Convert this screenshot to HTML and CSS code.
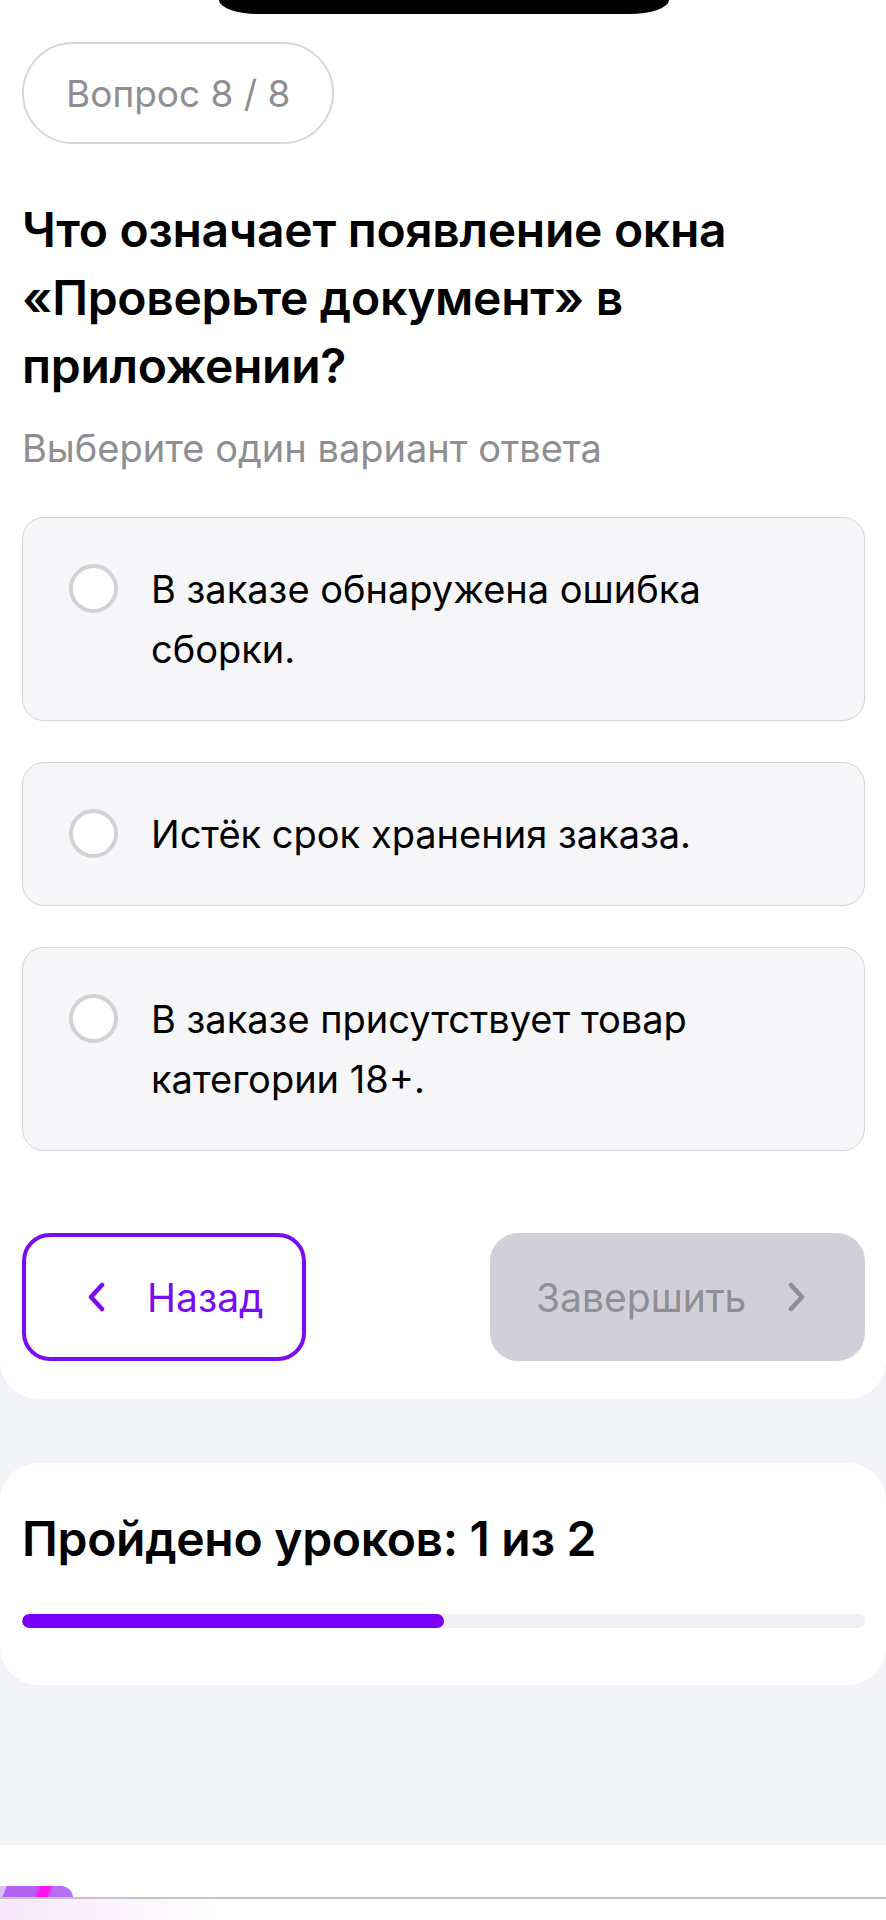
FILE: index.html
```html
<!DOCTYPE html>
<html lang="ru">
<head>
    <meta charset="UTF-8">
    <meta name="viewport" content="width=device-width, initial-scale=1.0">
    <title>Вопрос 8 / 8</title>
    <link rel="stylesheet" href="styles.css">
</head>
<body>
    <div class="page">
        <section class="quiz">
            <div class="notch"></div>
            <div class="counter">Вопрос 8 / 8</div>

            <h1 class="question">Что означает появление окна «Проверьте документ» в приложении?</h1>
            <p class="hint">Выберите один вариант ответа</p>

            <ul class="answers">
                <li class="answer">
                    <span class="radio"></span>
                    <span class="answer-text">В заказе обнаружена ошибка сборки.</span>
                </li>
                <li class="answer">
                    <span class="radio"></span>
                    <span class="answer-text">Истёк срок хранения заказа.</span>
                </li>
                <li class="answer">
                    <span class="radio"></span>
                    <span class="answer-text">В заказе присутствует товар категории 18+.</span>
                </li>
            </ul>

            <div class="nav">
                <button class="btn btn-back">
                    <svg class="chevron" width="18" height="30" viewBox="0 0 18 30"><path d="M15 3 L4 15 L15 27" /></svg>
                    Назад
                </button>
                <button class="btn btn-finish" disabled>
                    Завершить
                    <svg class="chevron" width="18" height="30" viewBox="0 0 18 30"><path d="M3 3 L14 15 L3 27" /></svg>
                </button>
            </div>
        </section>

        <section class="lessons">
            <h2>Пройдено уроков: 1 из 2</h2>
            <div class="bar"><div class="bar-fill" style="width: 50%"></div></div>
        </section>

        <div class="filler"></div>

        <div class="tabbar">
            <div class="tab-icon"></div>
        </div>
    </div>
</body>
</html>
```

FILE: styles.css
```css
* {
    box-sizing: border-box;
}

body {
    margin: 0;
    height: 100vh;
    background: #f2f3f6;
    font-family: 'Inter', 'Noto Sans', sans-serif;
    color: #000;
    overflow: hidden;
}

.page {
    height: 100%;
    display: flex;
    flex-direction: column;
}

/* top white block */
.quiz {
    background: #fff;
    padding: 0 21px 38px 22px;
    border-radius: 0 0 38px 38px;
}

.notch {
    width: 450px;
    height: 14px;
    margin: 0 auto;
    background: #000;
    border-radius: 0 0 40px 40px / 0 0 14px 14px;
}

.counter {
    display: inline-flex;
    align-items: center;
    height: 102px;
    margin-top: 28px;
    padding: 0 42px;
    border: 2px solid #d6d6db;
    border-radius: 51px;
    font-size: 37px;
    color: #8e8e93;
}

.question {
    margin: 52px 0 0;
    font-size: 48px;
    font-weight: 600;
    line-height: 68px;
    letter-spacing: -0.3px;
}

.hint {
    margin: 24px 0 0;
    font-size: 38px;
    line-height: 48px;
    color: #8e8e93;
}

.answers {
    list-style: none;
    margin: 45px 0 0;
    padding: 0;
    display: flex;
    flex-direction: column;
    gap: 41px;
}

.answer {
    display: flex;
    align-items: flex-start;
    gap: 33px;
    padding: 41px 46px;
    background: #f6f6f8;
    border: 1.5px solid #d4d4d9;
    border-radius: 22px;
}

.radio {
    flex: none;
    width: 49px;
    height: 49px;
    margin-top: 5px;
    background: #fff;
    border: 4px solid #d1d1d6;
    border-radius: 50%;
}

.answer-text {
    font-size: 38px;
    line-height: 60px;
}

.nav {
    display: flex;
    justify-content: space-between;
    margin-top: 82px;
}

.btn {
    display: flex;
    align-items: center;
    height: 128px;
    border-radius: 28px;
    font-family: inherit;
    font-size: 39px;
}

.chevron path {
    fill: none;
    stroke: currentColor;
    stroke-width: 4.5;
    stroke-linecap: round;
    stroke-linejoin: round;
}

.btn-back {
    width: 284px;
    padding: 0 0 0 61px;
    gap: 42px;
    background: #fff;
    border: 4px solid #7a0cf2;
    color: #7a0cf2;
}

.btn-finish {
    width: 375px;
    padding: 0 0 0 46px;
    gap: 42px;
    background: #d1d0d9;
    border: none;
    color: #8e8e93;
}

/* lessons progress */
.lessons {
    margin-top: 64px;
    padding: 42px 21px 57px 22px;
    background: #fff;
    border-radius: 38px;
}

.lessons h2 {
    margin: 0;
    font-size: 48px;
    font-weight: 600;
    line-height: 68px;
    letter-spacing: -0.3px;
}

.bar {
    margin-top: 41px;
    height: 14px;
    background: #f0f0f4;
    border-radius: 7px;
    overflow: hidden;
}

.bar-fill {
    height: 100%;
    background: #7a00f7;
    border-radius: 7px;
}

.filler {
    flex: 1;
}

/* bottom tab bar edge */
.tabbar {
    height: 75px;
    background: #fff;
    position: relative;
}

.tabbar::after {
    content: '';
    position: absolute;
    left: 0;
    right: 0;
    top: 52px;
    height: 2px;
    background: #c4c4c8;
}

.tabbar::before {
    content: '';
    position: absolute;
    left: 0;
    top: 54px;
    width: 220px;
    height: 21px;
    background: linear-gradient(90deg, #f8e6fb, #fff);
}

.tab-icon {
    position: absolute;
    left: 0;
    top: 41px;
    width: 73px;
    height: 12px;
    background: linear-gradient(110deg, #dcc3f7 0 8%, #b363f2 9% 48%, #ff14ee 55% 65%, #b86ef5 70%);
    border-radius: 0 24px 0 0;
}
```
